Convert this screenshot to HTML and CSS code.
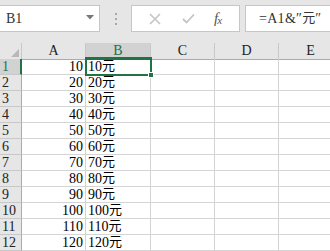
FILE: index.html
```html
<!DOCTYPE html>
<html>
<head>
<meta charset="utf-8">
<link rel="stylesheet" href="styles.css">
</head>
<body>
<div class="app">
  <div class="toolbar">
    <div class="namebox">
      <span class="name">B1</span>
      <svg class="drop" width="8" height="5" viewBox="0 0 8 5"><path d="M0 0H8L4 4.5Z" fill="#777"/></svg>
    </div>
    <div class="dots"><i></i><i></i><i></i></div>
    <div class="btnbox">
      <svg class="ico" width="12" height="12" viewBox="0 0 12 12"><path d="M1 1L11 11M11 1L1 11" stroke="#c4c4c4" stroke-width="1.6"/></svg>
      <svg class="ico" width="13" height="11" viewBox="0 0 13 11"><path d="M1 6L4.5 9.5L12 1.5" stroke="#c4c4c4" stroke-width="1.8" fill="none"/></svg>
      <span class="fx">f<sub>x</sub></span>
    </div>
    <div class="formula"><span>=A1&amp;″</span><span class="cj">元</span><span>″</span></div>
  </div>
  <div class="sheet">
    <div class="corner"><svg width="8" height="8" viewBox="0 0 8 8"><path d="M8 0V8H0Z" fill="#b8b8b8"/></svg></div>
    <div class="ch">A</div>
    <div class="ch sel">B</div>
    <div class="ch">C</div>
    <div class="ch">D</div>
    <div class="ch">E</div>
  </div>
  <div class="grid" id="grid"></div>
</div>
<script src="app.js"></script>
</body>
</html>
```
FILE: app.js
```js
var g = document.getElementById('grid');
var h = '';
for (var i = 1; i <= 12; i++) {
  var v = i * 10;
  h += '<div class="rh' + (i === 1 ? ' sel' : '') + '">' + i + '</div>';
  h += '<div class="c num">' + v + '</div>';
  h += '<div class="c txt' + (i === 1 ? ' active' : '') + '"><span>' + v + '</span><span class="cj">元</span>' + (i === 1 ? '<span class="selbox"><span class="handle"></span></span>' : '') + '</div>';
  h += '<div class="c"></div><div class="c"></div><div class="c"></div>';
}
g.innerHTML = h;
```
FILE: styles.css
```css
* { box-sizing: border-box; }
html, body { margin: 0; padding: 0; background: #fff; }
body { width: 330px; height: 251px; overflow: hidden; font-family: "Liberation Serif", "Noto Sans CJK SC", serif; color: #222; }
.app { width: 330px; }
.toolbar { height: 43px; background: #e6e6e6; display: flex; align-items: flex-start; padding-top: 5px; }
.namebox { width: 100px; height: 27px; background: #fff; border: 1px solid #c6c6c6; border-left: none; display: flex; align-items: center; justify-content: space-between; padding: 0 5px 0 6px; }
.name { font-size: 14px; color: #333; padding-top: 1px; }
.drop { margin-top: -2px; }
.dots { width: 31px; height: 27px; display: flex; flex-direction: column; align-items: center; justify-content: center; gap: 3px; }
.dots i { display: block; width: 2px; height: 2px; background: #a8a8a8; }
.btnbox { width: 109px; height: 27px; background: #fff; border: 1px solid #c6c6c6; display: flex; align-items: center; padding-left: 17px; gap: 21px; }
.fx { font-family: "Liberation Serif", serif; font-style: italic; font-size: 15px; color: #555; margin-left: -2px; }
.fx sub { font-size: 11px; vertical-align: -1px; margin-left: -1px; }
.formula { flex: 1; margin-left: 5px; height: 27px; background: #fff; border: 1px solid #c6c6c6; border-right: none; font-size: 14px; line-height: 16px; color: #333; padding: 0 0 0 13px; letter-spacing: 0.3px; display: flex; align-items: center; }
.cj { font-family: "Noto Sans CJK SC", sans-serif; font-size: 13px; line-height: 12px; height: 12px; letter-spacing: 0; display: block; position: relative; top: -2px; }
.sheet { display: grid; grid-template-columns: 22px 64px 65px 64px 64px 64px; height: 16px; background: #e6e6e6; }
.corner { border-right: 1px solid #c8c8c8; border-bottom: 1px solid #ababab; display: flex; align-items: flex-end; justify-content: flex-end; padding: 0 2px 2px 0; }
.corner svg { display: block; }
.ch { border-right: 1px solid #c8c8c8; border-bottom: 1px solid #ababab; text-align: center; font-size: 14px; line-height: 15px; color: #222; }
.ch.sel { background: #d2d2d2; color: #217346; border-bottom: 2px solid #217346; }
.grid { display: grid; grid-template-columns: 22px 64px 65px 64px 64px 64px; grid-auto-rows: 16px; }
.rh { background: #e6e6e6; border-right: 1px solid #ababab; border-bottom: 1px solid #c8c8c8; font-size: 14px; line-height: 16px; padding-left: 2px; color: #222; }
.rh.sel { background: #d2d2d2; color: #217346; border-right: 2px solid #217346; }
.c { border-right: 1px solid #d4d4d4; border-bottom: 1px solid #d4d4d4; font-size: 14px; line-height: 15px; color: #000; white-space: nowrap; }
.num { text-align: right; padding-right: 2px; }
.txt { padding-left: 2px; display: flex; align-items: center; }
.active { position: relative; }
.selbox { position: absolute; left: -1px; top: -2px; width: 67px; height: 19px; border: 2px solid #217346; }
.handle { position: absolute; right: -4px; bottom: -4px; width: 6px; height: 6px; background: #217346; border: 1px solid #fff; }
```
